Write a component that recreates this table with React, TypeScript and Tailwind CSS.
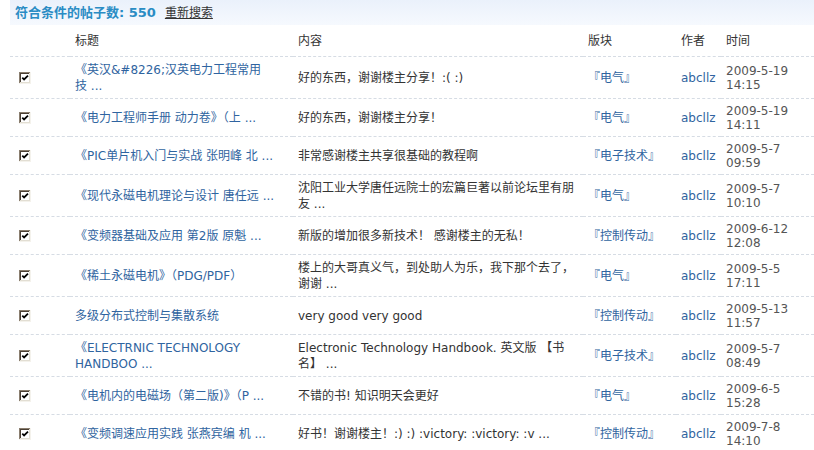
const rows = [
  { title: "《英汉&#8226;汉英电力工程常用\n技 ...", content: "好的东西，谢谢楼主分享！:( :)", board: "『电气』", time: "2009-5-19\n14:15" },
  { title: "《电力工程师手册 动力卷》（上 ...", content: "好的东西，谢谢楼主分享！", board: "『电气』", time: "2009-5-19\n14:11" },
  { title: "《PIC单片机入门与实战 张明峰 北 ...", content: "非常感谢楼主共享很基础的教程啊", board: "『电子技术』", time: "2009-5-7\n09:59" },
  { title: "《现代永磁电机理论与设计 唐任远 ...", content: "沈阳工业大学唐任远院士的宏篇巨著以前论坛里有朋\n友 ...", board: "『电气』", time: "2009-5-7\n10:10" },
  { title: "《变频器基础及应用 第2版 原魁 ...", content: "新版的增加很多新技术！ 感谢楼主的无私！", board: "『控制传动』", time: "2009-6-12\n12:08" },
  { title: "《稀土永磁电机》（PDG/PDF）", content: "楼上的大哥真义气，到处助人为乐，我下那个去了，\n谢谢 ...", board: "『电气』", time: "2009-5-5\n17:11" },
  { title: "多级分布式控制与集散系统", content: "very good very good", board: "『控制传动』", time: "2009-5-13\n11:57" },
  { title: "《ELECTRNIC TECHNOLOGY\nHANDBOO ...", content: "Electronic Technology Handbook. 英文版 【书\n名】 ...", board: "『电子技术』", time: "2009-5-7\n08:49" },
  { title: "《电机内的电磁场（第二版)》（P ...", content: "不错的书! 知识明天会更好", board: "『电气』", time: "2009-6-5\n15:28" },
  { title: "《变频调速应用实践 张燕宾编 机 ...", content: "好书！谢谢楼主！:) :) :victory: :victory: :v ...", board: "『控制传动』", time: "2009-7-8\n14:10" },
];

// old-style checked checkbox
function Checkbox() {
  return (
    <svg width="12" height="12" viewBox="0 0 12 12" className="block">
      <rect width="12" height="12" fill="#ffffff" />
      <rect x="0" y="0" width="11" height="1" fill="#8a7e6f" />
      <rect x="0" y="0" width="1" height="11" fill="#8a7e6f" />
      <rect x="1" y="1" width="9" height="1" fill="#4a3f34" />
      <rect x="1" y="1" width="1" height="9" fill="#4a3f34" />
      <rect x="11" y="0" width="1" height="12" fill="#f4f2ec" />
      <rect x="0" y="11" width="12" height="1" fill="#f4f2ec" />
      <rect x="10" y="1" width="1" height="10" fill="#e2ded3" />
      <rect x="1" y="10" width="10" height="1" fill="#e2ded3" />
      <path d="M3.3 5.6 L5.1 7.5 L9 3.6" stroke="#000" strokeWidth="1.8" fill="none" />
    </svg>
  );
}

export default function App() {
  return (
    <div className="min-h-screen bg-white pl-[10px] text-[12px] text-[#333] font-['DejaVu_Sans','Noto_Sans_CJK_SC',sans-serif]">
      <div className="flex h-[25px] items-center bg-gradient-to-b from-[#eaf1fb] to-[#f6f9fe] pl-[5px]">
        <span className="text-[13px] font-bold text-[#2a8cc4]">符合条件的帖子数: 550</span>
        <a className="ml-[9px] text-[#333] underline">重新搜索</a>
      </div>

      <table className="mt-px w-full table-fixed border-collapse">
        <colgroup>
          <col className="w-[60px]" />
          <col className="w-[223px]" />
          <col className="w-[290px]" />
          <col className="w-[93px]" />
          <col className="w-[45px]" />
          <col />
        </colgroup>
        <thead>
          <tr className="h-[30px] border-b border-dashed border-[#d6dce4] text-left">
            <th className="font-normal"></th>
            <th className="pl-[5px] font-normal">标题</th>
            <th className="pl-[5px] font-normal">内容</th>
            <th className="pl-[5px] font-normal">版块</th>
            <th className="pl-[5px] font-normal">作者</th>
            <th className="pl-[5px] font-normal">时间</th>
          </tr>
        </thead>
        <tbody>
          {rows.map((row, i) => (
            <tr key={i} className="border-b border-dashed border-[#d6dce4] align-middle">
              <td className="pl-[9px] pt-[5px] pb-[4px]">
                <Checkbox />
              </td>
              <td className="whitespace-pre pl-[5px] pt-[5px] pb-[4px] leading-[16px] text-[#2f64a0]">
                {row.title}
              </td>
              <td className="whitespace-pre pl-[5px] pt-[5px] pb-[4px] leading-[16px]">{row.content}</td>
              <td className="whitespace-nowrap pl-[5px] pt-[5px] pb-[4px] text-[#2f64a0]">{row.board}</td>
              <td className="whitespace-nowrap pl-[5px] pt-[5px] pb-[4px] text-[#2f64a0]">abcllz</td>
              <td className="whitespace-pre pl-[5px] pt-[5px] pb-[4px] leading-[14px] text-[#555]">{row.time}</td>
            </tr>
          ))}
        </tbody>
      </table>
    </div>
  );
}
